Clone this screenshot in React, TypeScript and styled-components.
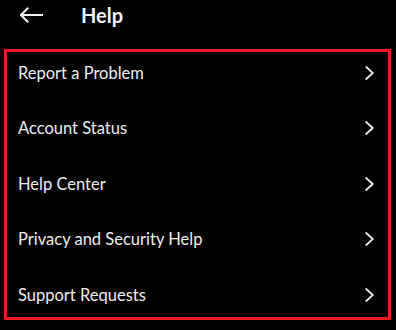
import React from "react";
import styled, { createGlobalStyle } from "styled-components";

const Global = createGlobalStyle`
  html, body { margin: 0; padding: 0; background: #000; }
  body { font-family: "Lato", "Open Sans", sans-serif; color: #f2f2f2; }
`;

const Page = styled.div`
  position: relative;
  width: 396px;
  height: 330px;
  background: #000;
  overflow: hidden;
`;

const Header = styled.header`
  display: flex;
  align-items: center;
  height: 30px;
  padding-left: 19px;
  gap: 38px;
`;

const Title = styled.h1`
  margin: 0;
  font-size: 20px;
  font-weight: 700;
  color: #f4f4f4;
  line-height: 30px;
`;

const List = styled.ul`
  list-style: none;
  margin: 15px 0 0 0;
  padding: 0;
`;

const Row = styled.li`
  display: flex;
  align-items: center;
  justify-content: space-between;
  height: 55.5px;
  padding: 0 22px 0 18px;
  font-size: 16.5px;
  color: #eeeeee;
`;

const Highlight = styled.div`
  position: absolute;
  left: 4px;
  top: 49px;
  width: 387px;
  height: 271px;
  box-sizing: border-box;
  border: 3px solid #ec1c24;
  pointer-events: none;
`;

const BackArrow = () => (
  <svg width="24" height="16" viewBox="0 0 24 16" fill="none" stroke="#f4f4f4" strokeWidth="2" strokeLinecap="square">
    <path d="M2 8H23M8.5 1.5L2 8l6.5 6.5" />
  </svg>
);

const Chevron = () => (
  <svg width="9" height="14" viewBox="0 0 9 14" fill="none" stroke="#f0f0f0" strokeWidth="1.7" strokeLinecap="round" strokeLinejoin="round">
    <path d="M1.2 1L7.8 7L1.2 13" />
  </svg>
);

const items = [
  "Report a Problem",
  "Account Status",
  "Help Center",
  "Privacy and Security Help",
  "Support Requests",
];

export default function App() {
  return (
    <Page>
      <Global />
      <Header>
        <BackArrow />
        <Title>Help</Title>
      </Header>
      <List>
        {items.map((t) => (
          <Row key={t}>
            <span>{t}</span>
            <Chevron />
          </Row>
        ))}
      </List>
      <Highlight />
    </Page>
  );
}
